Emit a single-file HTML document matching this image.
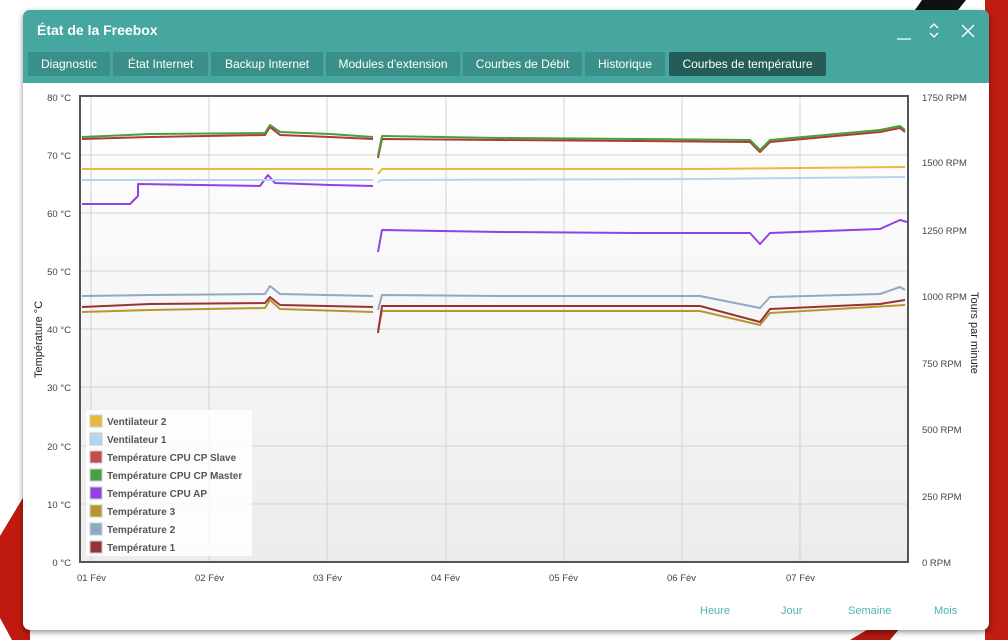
<!DOCTYPE html>
<html><head><meta charset="utf-8"><style>
*{margin:0;padding:0;box-sizing:border-box}
body{width:1008px;height:640px;overflow:hidden;background:#fff;font-family:"Liberation Sans",sans-serif;position:relative}
.win{position:absolute;left:23px;top:10px;width:966px;height:620px;background:#fff;border-radius:7px;box-shadow:0 2px 6px rgba(0,0,0,.45);overflow:hidden}
.hd{height:73px;background:#46a7a1}
.title{position:absolute;left:14px;top:12px;color:#fff;font-weight:bold;font-size:14px}
.tab{position:absolute;top:42px;height:24px;line-height:24px;background:#3b8f89;color:#fff;font-size:12px;text-align:center;border-radius:2px}
.tab.on{background:#245c58}
.lk{position:absolute;top:595px;color:#4bb5ad;font-size:11px}
</style></head><body>
<svg width="1008" height="640" style="position:absolute;left:0;top:0">
<polygon points="0,536 30,486 30,640 12,640 0,618" fill="#c0190f"/>
<rect x="985" y="0" width="23" height="640" fill="#bf1c12"/>
<polygon points="922,0 966,0 958,10 915,10" fill="#111"/>
<polygon points="850,640 870,628 900,628 890,640" fill="#b01a14"/>
</svg>
<div class="win">
<div class="hd"></div>
<div class="title">État de la Freebox</div>
<svg width="90" height="30" style="position:absolute;right:8px;top:6px" stroke="#fff" fill="none" stroke-width="1.3">
<line x1="6" y1="23" x2="20" y2="23"/>
<polyline points="39,12 43,8 47,12"/><polyline points="39,17 43,21 47,17"/>
<line x1="71" y1="9" x2="83" y2="21"/><line x1="83" y1="9" x2="71" y2="21"/>
</svg>
<div class="tab" style="left:5px;width:82px">Diagnostic</div>
<div class="tab" style="left:90px;width:95px">État Internet</div>
<div class="tab" style="left:188px;width:112px">Backup Internet</div>
<div class="tab" style="left:303px;width:134px">Modules d'extension</div>
<div class="tab" style="left:440px;width:119px">Courbes de Débit</div>
<div class="tab" style="left:562px;width:80px">Historique</div>
<div class="tab on" style="left:646px;width:157px">Courbes de température</div>
<div class="lk" style="left:677px">Heure</div>
<div class="lk" style="left:758px">Jour</div>
<div class="lk" style="left:825px">Semaine</div>
<div class="lk" style="left:911px">Mois</div>
</div>
<svg width="1008" height="640" style="position:absolute;left:0;top:0" font-family="Liberation Sans" font-size="9.5" fill="#444">
<defs><linearGradient id="g" x1="0" y1="0" x2="0" y2="1"><stop offset="0" stop-color="#fff"/><stop offset="1" stop-color="#ececec"/></linearGradient></defs>
<rect x="80" y="96" width="828" height="466" fill="url(#g)"/>
<g stroke="#d2d2d2" stroke-width="1">
<line x1="80" y1="155" x2="908" y2="155"/><line x1="80" y1="213" x2="908" y2="213"/><line x1="80" y1="271" x2="908" y2="271"/><line x1="80" y1="329" x2="908" y2="329"/><line x1="80" y1="387" x2="908" y2="387"/><line x1="80" y1="446" x2="908" y2="446"/><line x1="80" y1="504" x2="908" y2="504"/>
<line x1="91" y1="96" x2="91" y2="562"/><line x1="209" y1="96" x2="209" y2="562"/><line x1="327" y1="96" x2="327" y2="562"/><line x1="446" y1="96" x2="446" y2="562"/><line x1="564" y1="96" x2="564" y2="562"/><line x1="682" y1="96" x2="682" y2="562"/><line x1="800" y1="96" x2="800" y2="562"/>
</g>
<g fill="none" stroke-width="2" stroke-linejoin="round">
<polyline stroke="#b8962e" points="82,312 150,310 265,308 270,300 280,309 373,312"/><polyline stroke="#b8962e" points="378,330 382,311 500,311 640,311 700,311 760,325 770,313 905,305"/>
<polyline stroke="#993333" points="82,307 150,304 265,303 270,297 280,305 373,307"/><polyline stroke="#993333" points="378,333 382,306 500,306 640,306 700,306 760,322 770,309 880,304 905,300"/>
<polyline stroke="#8ea9c4" points="82,296 150,295 265,294 270,286 280,294 373,296"/><polyline stroke="#8ea9c4" points="378,310 382,295 500,296 640,296 700,296 760,308 770,297 880,294 900,287 905,290"/>
<polyline stroke="#9340e8" points="82,204 130,204 138,196 138,184 260,186 268,175 275,183 330,185 373,186"/><polyline stroke="#9340e8" points="378,252 382,230 500,232 640,233 750,233 760,244 770,233 880,229 900,220 907,222"/>
<polyline stroke="#b4d4f2" points="82,180 373,180"/><polyline stroke="#b4d4f2" points="378,182 382,180 700,179 905,177"/>
<polyline stroke="#e8bb40" points="82,169 373,169"/><polyline stroke="#e8bb40" points="378,174 382,169 700,169 905,167"/>
<polyline stroke="#b03a3a" points="82,139 150,137 265,135 270,127 280,135 330,137 373,139"/><polyline stroke="#b03a3a" points="378,158 382,139 500,140 640,141 750,142 760,152 770,142 880,132 900,128 905,132"/>
<polyline stroke="#4a9e3e" points="82,137 150,134 265,133 270,125 280,132 330,134 373,137"/><polyline stroke="#4a9e3e" points="378,156 382,136 500,138 640,139 750,140 760,150 770,140 880,130 900,126 905,130"/>
</g>
<rect x="80" y="96" width="828" height="466" fill="none" stroke="#555" stroke-width="2"/>
<rect x="86" y="410" width="166" height="146" fill="#fff" fill-opacity="0.85"/>
<g font-weight="bold" font-size="10" fill="#555">
<g stroke="#ccc" stroke-width="1">
<rect x="90" y="415" width="12" height="12" fill="#e8bb40"/><rect x="90" y="433" width="12" height="12" fill="#b4d4f2"/><rect x="90" y="451" width="12" height="12" fill="#c84a48"/><rect x="90" y="469" width="12" height="12" fill="#4aa04a"/><rect x="90" y="487" width="12" height="12" fill="#9340e8"/><rect x="90" y="505" width="12" height="12" fill="#b8962e"/><rect x="90" y="523" width="12" height="12" fill="#8ea9c4"/><rect x="90" y="541" width="12" height="12" fill="#993333"/>
</g>
<text x="107" y="425">Ventilateur 2</text><text x="107" y="443">Ventilateur 1</text><text x="107" y="461">Température CPU CP Slave</text><text x="107" y="479">Température CPU CP Master</text><text x="107" y="497">Température CPU AP</text><text x="107" y="515">Température 3</text><text x="107" y="533">Température 2</text><text x="107" y="551">Température 1</text>
</g>
<g text-anchor="end">
<text x="71" y="101">80 °C</text><text x="71" y="159">70 °C</text><text x="71" y="217">60 °C</text><text x="71" y="275">50 °C</text><text x="71" y="333">40 °C</text><text x="71" y="391">30 °C</text><text x="71" y="450">20 °C</text><text x="71" y="508">10 °C</text><text x="71" y="566">0 °C</text>
</g>
<g>
<text x="922" y="101">1750 RPM</text><text x="922" y="166">1500 RPM</text><text x="922" y="234">1250 RPM</text><text x="922" y="300">1000 RPM</text><text x="922" y="367">750 RPM</text><text x="922" y="433">500 RPM</text><text x="922" y="500">250 RPM</text><text x="922" y="566">0 RPM</text>
<text x="77" y="581">01 Fév</text><text x="195" y="581">02 Fév</text><text x="313" y="581">03 Fév</text><text x="431" y="581">04 Fév</text><text x="549" y="581">05 Fév</text><text x="667" y="581">06 Fév</text><text x="786" y="581">07 Fév</text>
</g>
<text x="0" y="0" font-size="11" fill="#222" transform="translate(42,378) rotate(-90)">Température °C</text>
<text x="0" y="0" font-size="11" fill="#222" transform="translate(971,292) rotate(90)">Tours par minute</text>
</svg>
</body></html>
